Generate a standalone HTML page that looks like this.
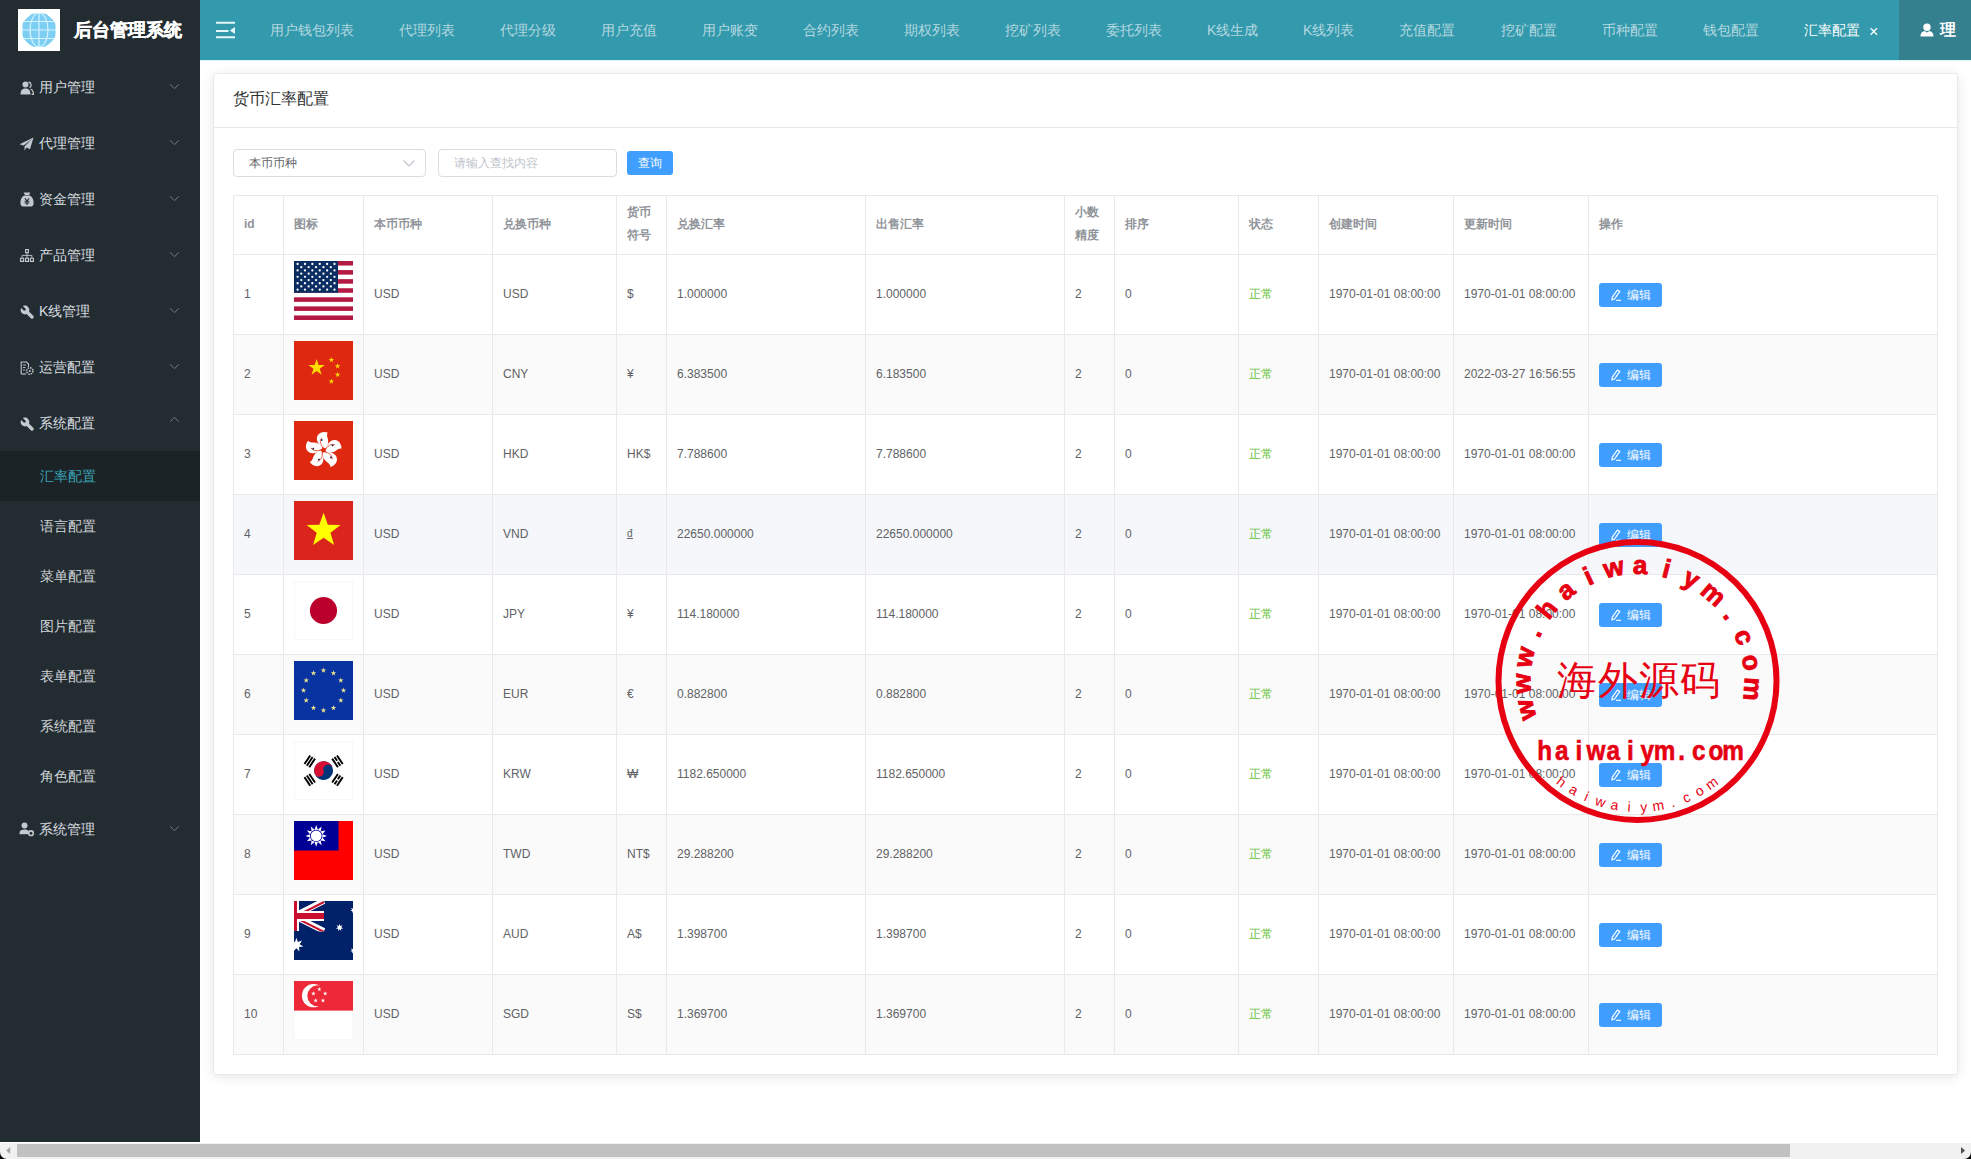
<!DOCTYPE html><html><head><meta charset="utf-8"><title>货币汇率配置</title><style>
*{box-sizing:border-box;margin:0;padding:0}
html,body{width:1971px;height:1159px;overflow:hidden;background:#fff;font-family:"Liberation Sans",sans-serif;}
.abs{position:absolute}
#side{position:absolute;left:0;top:0;width:200px;height:1142px;background:#232c31}
#hdr{position:absolute;left:200px;top:0;width:1771px;height:60px;background:#3399ac}
.tab{position:absolute;top:0;height:60px;line-height:60px;font-size:14px;color:#b4d8e0;white-space:nowrap}
.menu{position:absolute;left:0;width:200px;height:56px;font-size:14px;color:#d9dde0}
.menu .t{position:absolute;left:39px;top:0;line-height:56px}
.sub{position:absolute;left:0;width:200px;height:50px;font-size:14px;color:#d0d4d7}
.sub .t{position:absolute;left:40px;top:0;line-height:50px}
#card{position:absolute;left:213px;top:73px;width:1745px;height:1002px;background:#fff;border:1px solid #e9e9e9;border-radius:3px;box-shadow:0 2px 12px 0 rgba(0,0,0,.1)}
.cell{position:absolute;font-size:12px;color:#606266;white-space:nowrap}
.hcell{position:absolute;font-size:12px;color:#909399;font-weight:bold;white-space:nowrap}
</style></head><body>
<div id="side">
<div class="abs" style="left:74px;top:17px;font-size:18px;font-weight:bold;color:#fff;line-height:26px;-webkit-text-stroke:0.4px #fff">后台管理系统</div>
<div class="menu" style="top:59px"><span class="t">用户管理</span></div>
<div class="menu" style="top:115px"><span class="t">代理管理</span></div>
<div class="menu" style="top:171px"><span class="t">资金管理</span></div>
<div class="menu" style="top:227px"><span class="t">产品管理</span></div>
<div class="menu" style="top:283px"><span class="t">K线管理</span></div>
<div class="menu" style="top:339px"><span class="t">运营配置</span></div>
<div class="menu" style="top:395px"><span class="t">系统配置</span></div>
<div class="sub" style="top:451px;background:#1c2327;color:#3ba3b8;"><span class="t">汇率配置</span></div>
<div class="sub" style="top:501px;"><span class="t">语言配置</span></div>
<div class="sub" style="top:551px;"><span class="t">菜单配置</span></div>
<div class="sub" style="top:601px;"><span class="t">图片配置</span></div>
<div class="sub" style="top:651px;"><span class="t">表单配置</span></div>
<div class="sub" style="top:701px;"><span class="t">系统配置</span></div>
<div class="sub" style="top:751px;"><span class="t">角色配置</span></div>
<div class="menu" style="top:801px"><span class="t">系统管理</span></div>
<svg class="abs" style="left:20px;top:81px" width="14" height="14" viewBox="0 0 14 14"><circle cx="5.5" cy="3.6" r="3" fill="#c3c9ce"/><path d="M0.5 13.5 C0.5 9 2.5 7.5 5.5 7.5 C8.5 7.5 10.5 9 10.5 13.5 Z" fill="#c3c9ce"/><path d="M8.6 1 A3 3 0 0 1 9.5 6.6 M10.5 8 C12.5 8.8 13.5 10.5 13.5 13.5 L11.6 13.5" fill="none" stroke="#c3c9ce" stroke-width="1.3"/></svg>
<svg class="abs" style="left:19px;top:137px" width="15" height="14" viewBox="0 0 15 14"><path d="M14.5 0.5 L0.5 7.2 L4.6 8.6 L13 2 L5.6 9.2 L5.4 13.5 L7.6 10.4 L11 12.2 Z" fill="#c3c9ce"/></svg>
<svg class="abs" style="left:20px;top:192px" width="14" height="15" viewBox="0 0 14 15"><path d="M3.6 0.6 H10.4 L9 3 H5 Z" fill="#c3c9ce"/><path d="M4.2 3.6 H9.8 C12.4 5 13.6 7.6 13.6 11 C13.6 13.4 12.6 14.4 11 14.4 H3 C1.4 14.4 0.4 13.4 0.4 11 C0.4 7.6 1.6 5 4.2 3.6 Z" fill="#c3c9ce"/><path d="M4.8 6.4 L7 8.8 L9.2 6.4 M4.6 9.2 H9.4 M4.6 11 H9.4 M7 8.8 V13" stroke="#232c31" stroke-width="1.1" fill="none"/></svg>
<svg class="abs" style="left:20px;top:249px" width="14" height="13" viewBox="0 0 14 13"><path d="M5.6 0.6 H8.4 V3.6 H5.6 Z M0.6 9.2 H3.6 V12.4 H0.6 Z M5.5 9.2 H8.5 V12.4 H5.5 Z M10.4 9.2 H13.4 V12.4 H10.4 Z" fill="none" stroke="#c3c9ce" stroke-width="1.1"/><path d="M7 3.6 V9.2 M2.1 9.2 V6.4 H11.9 V9.2" fill="none" stroke="#c3c9ce" stroke-width="0.9"/></svg>
<svg class="abs" style="left:20px;top:305px" width="14" height="14" viewBox="0 0 14 14"><path d="M6 6 L12 12" stroke="#c3c9ce" stroke-width="3.4" stroke-linecap="round"/><circle cx="5" cy="5" r="4.4" fill="#c3c9ce"/><path d="M1.2 1.2 L4.4 4.4" stroke="#232c31" stroke-width="2.6" stroke-linecap="round"/></svg>
<svg class="abs" style="left:20px;top:361px" width="14" height="14" viewBox="0 0 14 14"><path d="M1.2 13 V1 H6.5 L8.5 3 V6" fill="none" stroke="#c3c9ce" stroke-width="1.1"/><path d="M1.2 13 H6" fill="none" stroke="#c3c9ce" stroke-width="1.1"/><path d="M3 4 H6 M3 6.5 H5.5 M3 9 H5" stroke="#c3c9ce" stroke-width="0.9"/><circle cx="9.8" cy="10" r="3.2" fill="none" stroke="#c3c9ce" stroke-width="1.4" stroke-dasharray="1.6 0.9"/><circle cx="9.8" cy="10" r="1" fill="#c3c9ce"/></svg>
<svg class="abs" style="left:20px;top:417px" width="14" height="14" viewBox="0 0 14 14"><path d="M6 6 L12 12" stroke="#c3c9ce" stroke-width="3.4" stroke-linecap="round"/><circle cx="5" cy="5" r="4.4" fill="#c3c9ce"/><path d="M1.2 1.2 L4.4 4.4" stroke="#232c31" stroke-width="2.6" stroke-linecap="round"/></svg>
<svg class="abs" style="left:19px;top:822px" width="16" height="15" viewBox="0 0 16 15"><circle cx="5.5" cy="3.6" r="3" fill="#c3c9ce"/><path d="M0.5 11 C0.5 8.5 2.5 7.4 5.5 7.4 C7.5 7.4 9 8 9.8 9 L9.8 11 Z" fill="#c3c9ce"/><path d="M0.5 11.6 H9" stroke="#c3c9ce" stroke-width="1.2"/><circle cx="12" cy="11.2" r="2.3" fill="none" stroke="#c3c9ce" stroke-width="1.6"/></svg>
<svg class="abs" style="left:169px;top:83px" width="11" height="7" viewBox="0 0 11 7"><path d="M1 1.2 L5.5 5.7 L10 1.2" fill="none" stroke="#737b81" stroke-width="1"/></svg>
<svg class="abs" style="left:169px;top:139px" width="11" height="7" viewBox="0 0 11 7"><path d="M1 1.2 L5.5 5.7 L10 1.2" fill="none" stroke="#737b81" stroke-width="1"/></svg>
<svg class="abs" style="left:169px;top:195px" width="11" height="7" viewBox="0 0 11 7"><path d="M1 1.2 L5.5 5.7 L10 1.2" fill="none" stroke="#737b81" stroke-width="1"/></svg>
<svg class="abs" style="left:169px;top:251px" width="11" height="7" viewBox="0 0 11 7"><path d="M1 1.2 L5.5 5.7 L10 1.2" fill="none" stroke="#737b81" stroke-width="1"/></svg>
<svg class="abs" style="left:169px;top:307px" width="11" height="7" viewBox="0 0 11 7"><path d="M1 1.2 L5.5 5.7 L10 1.2" fill="none" stroke="#737b81" stroke-width="1"/></svg>
<svg class="abs" style="left:169px;top:363px" width="11" height="7" viewBox="0 0 11 7"><path d="M1 1.2 L5.5 5.7 L10 1.2" fill="none" stroke="#737b81" stroke-width="1"/></svg>
<svg class="abs" style="left:169px;top:416px" width="11" height="7" viewBox="0 0 11 7"><path d="M1 5.8 L5.5 1.3 L10 5.8" fill="none" stroke="#737b81" stroke-width="1"/></svg>
<svg class="abs" style="left:169px;top:825px" width="11" height="7" viewBox="0 0 11 7"><path d="M1 1.2 L5.5 5.7 L10 1.2" fill="none" stroke="#737b81" stroke-width="1"/></svg>
<svg class="abs" style="left:18px;top:9px" width="42" height="42" viewBox="0 0 42 42"><rect width="42" height="42" fill="#fff"/><clipPath id="gc"><path d="M14 4.5 H28 L37.5 13 V29 L28 38 H14 L4.5 29 V13 Z"/></clipPath><g clip-path="url(#gc)"><circle cx="21" cy="21" r="17.5" fill="#7ccff2"/><path d="M3 12.5 H39 M3 21 H39 M3 29.5 H39 M21 3 V39" stroke="#d6f3ff" stroke-width="1.2"/><ellipse cx="21" cy="21" rx="9" ry="17" fill="none" stroke="#d6f3ff" stroke-width="1.2"/></g></svg>
</div>
<div id="hdr">
<div class="tab" style="left:70px">用户钱包列表</div>
<div class="tab" style="left:199px">代理列表</div>
<div class="tab" style="left:300px">代理分级</div>
<div class="tab" style="left:401px">用户充值</div>
<div class="tab" style="left:502px">用户账变</div>
<div class="tab" style="left:603px">合约列表</div>
<div class="tab" style="left:704px">期权列表</div>
<div class="tab" style="left:805px">挖矿列表</div>
<div class="tab" style="left:906px">委托列表</div>
<div class="tab" style="left:1007px">K线生成</div>
<div class="tab" style="left:1103px">K线列表</div>
<div class="tab" style="left:1199px">充值配置</div>
<div class="tab" style="left:1301px">挖矿配置</div>
<div class="tab" style="left:1402px">币种配置</div>
<div class="tab" style="left:1503px">钱包配置</div>
<div class="tab" style="left:1604px;color:#fff">汇率配置</div>
<div class="tab" style="left:1669px;top:2px;color:#fff;font-size:16px">×</div>
<div class="abs" style="left:1699px;top:0;width:72px;height:60px;background:#34808f"></div>
<div class="tab" style="left:1740px;color:#fff;font-size:16px;font-weight:bold">理</div>
<svg class="abs" style="left:16px;top:21px" width="20" height="18" viewBox="0 0 20 18"><path d="M0 1.8 H19 M0 10 H12.5 M0 16.3 H19" stroke="#e6f7fb" stroke-width="1.9"/><path d="M19 6 L13.8 9.5 L19 13 Z" fill="#e6f7fb"/></svg>
<svg class="abs" style="left:1720px;top:23px" width="14" height="14" viewBox="0 0 14 14"><circle cx="7" cy="4.2" r="3.7" fill="#fff"/><path d="M0.5 13.5 C0.5 9.5 3 8.2 4.6 8 L7 9.5 L9.4 8 C11 8.2 13.5 9.5 13.5 13.5 Z" fill="#fff"/></svg>
</div>
<div id="card"></div>
<div class="abs" style="left:233px;top:87px;font-size:16px;color:#303133;line-height:24px">货币汇率配置</div>
<div class="abs" style="left:214px;top:127px;width:1743px;height:1px;background:#e9e9e9"></div>
<div class="abs" style="left:233px;top:149px;width:193px;height:28px;border:1px solid #dcdcdc;border-radius:4px;background:#fff"></div>
<div class="abs" style="left:249px;top:149px;font-size:12px;color:#606266;line-height:29px">本币币种</div>
<svg class="abs" style="left:402px;top:158px" width="14" height="10" viewBox="0 0 14 10"><path d="M1.5 2.5 L7 8 L12.5 2.5" fill="none" stroke="#c0c4cc" stroke-width="1.2"/></svg>
<div class="abs" style="left:438px;top:149px;width:179px;height:28px;border:1px solid #dcdcdc;border-radius:4px;background:#fff"></div>
<div class="abs" style="left:454px;top:149px;font-size:12px;color:#c0c4cc;line-height:29px">请输入查找内容</div>
<div class="abs" style="left:627px;top:151px;width:46px;height:24px;background:#409eff;border-radius:3px;color:#fff;font-size:12px;line-height:24px;text-align:center">查询</div>
<div class="abs" style="left:233px;top:254px;width:1705px;height:80px;background:#fff"></div>
<div class="abs" style="left:233px;top:334px;width:1705px;height:80px;background:#fafafa"></div>
<div class="abs" style="left:233px;top:414px;width:1705px;height:80px;background:#fff"></div>
<div class="abs" style="left:233px;top:494px;width:1705px;height:80px;background:#f5f7fa"></div>
<div class="abs" style="left:233px;top:574px;width:1705px;height:80px;background:#fff"></div>
<div class="abs" style="left:233px;top:654px;width:1705px;height:80px;background:#fafafa"></div>
<div class="abs" style="left:233px;top:734px;width:1705px;height:80px;background:#fff"></div>
<div class="abs" style="left:233px;top:814px;width:1705px;height:80px;background:#fafafa"></div>
<div class="abs" style="left:233px;top:894px;width:1705px;height:80px;background:#fff"></div>
<div class="abs" style="left:233px;top:974px;width:1705px;height:80px;background:#fafafa"></div>
<div class="abs" style="left:233px;top:195px;width:1705px;height:1px;background:#e9e9e9"></div>
<div class="abs" style="left:233px;top:254px;width:1705px;height:1px;background:#e9e9e9"></div>
<div class="abs" style="left:233px;top:334px;width:1705px;height:1px;background:#e9e9e9"></div>
<div class="abs" style="left:233px;top:414px;width:1705px;height:1px;background:#e9e9e9"></div>
<div class="abs" style="left:233px;top:494px;width:1705px;height:1px;background:#e9e9e9"></div>
<div class="abs" style="left:233px;top:574px;width:1705px;height:1px;background:#e9e9e9"></div>
<div class="abs" style="left:233px;top:654px;width:1705px;height:1px;background:#e9e9e9"></div>
<div class="abs" style="left:233px;top:734px;width:1705px;height:1px;background:#e9e9e9"></div>
<div class="abs" style="left:233px;top:814px;width:1705px;height:1px;background:#e9e9e9"></div>
<div class="abs" style="left:233px;top:894px;width:1705px;height:1px;background:#e9e9e9"></div>
<div class="abs" style="left:233px;top:974px;width:1705px;height:1px;background:#e9e9e9"></div>
<div class="abs" style="left:233px;top:1054px;width:1705px;height:1px;background:#e9e9e9"></div>
<div class="abs" style="left:233px;top:195px;width:1px;height:860px;background:#e9e9e9"></div>
<div class="abs" style="left:283px;top:195px;width:1px;height:860px;background:#e9e9e9"></div>
<div class="abs" style="left:363px;top:195px;width:1px;height:860px;background:#e9e9e9"></div>
<div class="abs" style="left:492px;top:195px;width:1px;height:860px;background:#e9e9e9"></div>
<div class="abs" style="left:616px;top:195px;width:1px;height:860px;background:#e9e9e9"></div>
<div class="abs" style="left:666px;top:195px;width:1px;height:860px;background:#e9e9e9"></div>
<div class="abs" style="left:865px;top:195px;width:1px;height:860px;background:#e9e9e9"></div>
<div class="abs" style="left:1064px;top:195px;width:1px;height:860px;background:#e9e9e9"></div>
<div class="abs" style="left:1114px;top:195px;width:1px;height:860px;background:#e9e9e9"></div>
<div class="abs" style="left:1238px;top:195px;width:1px;height:860px;background:#e9e9e9"></div>
<div class="abs" style="left:1318px;top:195px;width:1px;height:860px;background:#e9e9e9"></div>
<div class="abs" style="left:1453px;top:195px;width:1px;height:860px;background:#e9e9e9"></div>
<div class="abs" style="left:1588px;top:195px;width:1px;height:860px;background:#e9e9e9"></div>
<div class="abs" style="left:1937px;top:195px;width:1px;height:860px;background:#e9e9e9"></div>
<div class="hcell" style="left:244px;top:195px;line-height:59px">id</div>
<div class="hcell" style="left:294px;top:195px;line-height:59px">图标</div>
<div class="hcell" style="left:374px;top:195px;line-height:59px">本币币种</div>
<div class="hcell" style="left:503px;top:195px;line-height:59px">兑换币种</div>
<div class="hcell" style="left:627px;top:201px;line-height:23px">货币<br>符号</div>
<div class="hcell" style="left:677px;top:195px;line-height:59px">兑换汇率</div>
<div class="hcell" style="left:876px;top:195px;line-height:59px">出售汇率</div>
<div class="hcell" style="left:1075px;top:201px;line-height:23px">小数<br>精度</div>
<div class="hcell" style="left:1125px;top:195px;line-height:59px">排序</div>
<div class="hcell" style="left:1249px;top:195px;line-height:59px">状态</div>
<div class="hcell" style="left:1329px;top:195px;line-height:59px">创建时间</div>
<div class="hcell" style="left:1464px;top:195px;line-height:59px">更新时间</div>
<div class="hcell" style="left:1599px;top:195px;line-height:59px">操作</div>
<div class="cell" style="left:244px;top:254px;line-height:80px">1</div>
<div class="cell" style="left:374px;top:254px;line-height:80px">USD</div>
<div class="cell" style="left:503px;top:254px;line-height:80px">USD</div>
<div class="cell" style="left:627px;top:254px;line-height:80px">$</div>
<div class="cell" style="left:677px;top:254px;line-height:80px">1.000000</div>
<div class="cell" style="left:876px;top:254px;line-height:80px">1.000000</div>
<div class="cell" style="left:1075px;top:254px;line-height:80px">2</div>
<div class="cell" style="left:1125px;top:254px;line-height:80px">0</div>
<div class="cell" style="left:1329px;top:254px;line-height:80px">1970-01-01 08:00:00</div>
<div class="cell" style="left:1464px;top:254px;line-height:80px">1970-01-01 08:00:00</div>
<div class="cell" style="left:1249px;top:254px;line-height:80px;color:#67c23a">正常</div>
<svg class="abs" style="left:294px;top:261px" width="59" height="59" viewBox="0 0 59 59"><rect width="59" height="59" fill="#fff"/><rect y="0.00" width="59" height="4.54" fill="#b31942"/><rect y="9.08" width="59" height="4.54" fill="#b31942"/><rect y="18.15" width="59" height="4.54" fill="#b31942"/><rect y="27.23" width="59" height="4.54" fill="#b31942"/><rect y="36.31" width="59" height="4.54" fill="#b31942"/><rect y="45.38" width="59" height="4.54" fill="#b31942"/><rect y="54.46" width="59" height="4.54" fill="#b31942"/><rect width="44" height="31.77" fill="#0a2d62"/><circle cx="3.60" cy="3.00" r="1.15" fill="#fff"/><circle cx="10.98" cy="3.00" r="1.15" fill="#fff"/><circle cx="18.36" cy="3.00" r="1.15" fill="#fff"/><circle cx="25.74" cy="3.00" r="1.15" fill="#fff"/><circle cx="33.12" cy="3.00" r="1.15" fill="#fff"/><circle cx="40.50" cy="3.00" r="1.15" fill="#fff"/><circle cx="7.29" cy="6.21" r="1.15" fill="#fff"/><circle cx="14.67" cy="6.21" r="1.15" fill="#fff"/><circle cx="22.05" cy="6.21" r="1.15" fill="#fff"/><circle cx="29.43" cy="6.21" r="1.15" fill="#fff"/><circle cx="36.81" cy="6.21" r="1.15" fill="#fff"/><circle cx="3.60" cy="9.42" r="1.15" fill="#fff"/><circle cx="10.98" cy="9.42" r="1.15" fill="#fff"/><circle cx="18.36" cy="9.42" r="1.15" fill="#fff"/><circle cx="25.74" cy="9.42" r="1.15" fill="#fff"/><circle cx="33.12" cy="9.42" r="1.15" fill="#fff"/><circle cx="40.50" cy="9.42" r="1.15" fill="#fff"/><circle cx="7.29" cy="12.63" r="1.15" fill="#fff"/><circle cx="14.67" cy="12.63" r="1.15" fill="#fff"/><circle cx="22.05" cy="12.63" r="1.15" fill="#fff"/><circle cx="29.43" cy="12.63" r="1.15" fill="#fff"/><circle cx="36.81" cy="12.63" r="1.15" fill="#fff"/><circle cx="3.60" cy="15.84" r="1.15" fill="#fff"/><circle cx="10.98" cy="15.84" r="1.15" fill="#fff"/><circle cx="18.36" cy="15.84" r="1.15" fill="#fff"/><circle cx="25.74" cy="15.84" r="1.15" fill="#fff"/><circle cx="33.12" cy="15.84" r="1.15" fill="#fff"/><circle cx="40.50" cy="15.84" r="1.15" fill="#fff"/><circle cx="7.29" cy="19.05" r="1.15" fill="#fff"/><circle cx="14.67" cy="19.05" r="1.15" fill="#fff"/><circle cx="22.05" cy="19.05" r="1.15" fill="#fff"/><circle cx="29.43" cy="19.05" r="1.15" fill="#fff"/><circle cx="36.81" cy="19.05" r="1.15" fill="#fff"/><circle cx="3.60" cy="22.26" r="1.15" fill="#fff"/><circle cx="10.98" cy="22.26" r="1.15" fill="#fff"/><circle cx="18.36" cy="22.26" r="1.15" fill="#fff"/><circle cx="25.74" cy="22.26" r="1.15" fill="#fff"/><circle cx="33.12" cy="22.26" r="1.15" fill="#fff"/><circle cx="40.50" cy="22.26" r="1.15" fill="#fff"/><circle cx="7.29" cy="25.47" r="1.15" fill="#fff"/><circle cx="14.67" cy="25.47" r="1.15" fill="#fff"/><circle cx="22.05" cy="25.47" r="1.15" fill="#fff"/><circle cx="29.43" cy="25.47" r="1.15" fill="#fff"/><circle cx="36.81" cy="25.47" r="1.15" fill="#fff"/><circle cx="3.60" cy="28.68" r="1.15" fill="#fff"/><circle cx="10.98" cy="28.68" r="1.15" fill="#fff"/><circle cx="18.36" cy="28.68" r="1.15" fill="#fff"/><circle cx="25.74" cy="28.68" r="1.15" fill="#fff"/><circle cx="33.12" cy="28.68" r="1.15" fill="#fff"/><circle cx="40.50" cy="28.68" r="1.15" fill="#fff"/></svg>
<div class="abs" style="left:1599px;top:283px;width:63px;height:24px;background:#409eff;border-radius:3px"></div>
<div class="abs" style="left:1627px;top:283px;font-size:12px;color:#fff;line-height:24px">编辑</div>
<svg class="abs" style="left:1610px;top:289px" width="12" height="12" viewBox="0 0 12 12"><path d="M7.4 1 L9.8 2.4 L4.6 10 L2 11 L2.2 8.4 Z" fill="none" stroke="#fff" stroke-width="1.2" stroke-linejoin="round"/><path d="M6 11.3 H11" stroke="#fff" stroke-width="1.1"/></svg>
<div class="cell" style="left:244px;top:334px;line-height:80px">2</div>
<div class="cell" style="left:374px;top:334px;line-height:80px">USD</div>
<div class="cell" style="left:503px;top:334px;line-height:80px">CNY</div>
<div class="cell" style="left:627px;top:334px;line-height:80px">¥</div>
<div class="cell" style="left:677px;top:334px;line-height:80px">6.383500</div>
<div class="cell" style="left:876px;top:334px;line-height:80px">6.183500</div>
<div class="cell" style="left:1075px;top:334px;line-height:80px">2</div>
<div class="cell" style="left:1125px;top:334px;line-height:80px">0</div>
<div class="cell" style="left:1329px;top:334px;line-height:80px">1970-01-01 08:00:00</div>
<div class="cell" style="left:1464px;top:334px;line-height:80px">2022-03-27 16:56:55</div>
<div class="cell" style="left:1249px;top:334px;line-height:80px;color:#67c23a">正常</div>
<svg class="abs" style="left:294px;top:341px" width="59" height="59" viewBox="0 0 59 59"><rect width="59" height="59" fill="#de2910"/><path d="M22.60,18.10 L24.53,24.04 L30.78,24.04 L25.72,27.72 L27.65,33.66 L22.60,29.99 L17.55,33.66 L19.48,27.72 L14.42,24.04 L20.67,24.04Z" fill="#ffde00"/><path d="M37.40,16.10 L38.05,18.10 L40.16,18.10 L38.45,19.34 L39.10,21.35 L37.40,20.11 L35.70,21.35 L36.35,19.34 L34.64,18.10 L36.75,18.10Z" fill="#ffde00"/><path d="M43.60,22.30 L44.25,24.30 L46.36,24.30 L44.65,25.54 L45.30,27.55 L43.60,26.31 L41.90,27.55 L42.55,25.54 L40.84,24.30 L42.95,24.30Z" fill="#ffde00"/><path d="M43.60,30.80 L44.25,32.80 L46.36,32.80 L44.65,34.04 L45.30,36.05 L43.60,34.81 L41.90,36.05 L42.55,34.04 L40.84,32.80 L42.95,32.80Z" fill="#ffde00"/><path d="M37.40,37.50 L38.05,39.50 L40.16,39.50 L38.45,40.74 L39.10,42.75 L37.40,41.51 L35.70,42.75 L36.35,40.74 L34.64,39.50 L36.75,39.50Z" fill="#ffde00"/></svg>
<div class="abs" style="left:1599px;top:363px;width:63px;height:24px;background:#409eff;border-radius:3px"></div>
<div class="abs" style="left:1627px;top:363px;font-size:12px;color:#fff;line-height:24px">编辑</div>
<svg class="abs" style="left:1610px;top:369px" width="12" height="12" viewBox="0 0 12 12"><path d="M7.4 1 L9.8 2.4 L4.6 10 L2 11 L2.2 8.4 Z" fill="none" stroke="#fff" stroke-width="1.2" stroke-linejoin="round"/><path d="M6 11.3 H11" stroke="#fff" stroke-width="1.1"/></svg>
<div class="cell" style="left:244px;top:414px;line-height:80px">3</div>
<div class="cell" style="left:374px;top:414px;line-height:80px">USD</div>
<div class="cell" style="left:503px;top:414px;line-height:80px">HKD</div>
<div class="cell" style="left:627px;top:414px;line-height:80px">HK$</div>
<div class="cell" style="left:677px;top:414px;line-height:80px">7.788600</div>
<div class="cell" style="left:876px;top:414px;line-height:80px">7.788600</div>
<div class="cell" style="left:1075px;top:414px;line-height:80px">2</div>
<div class="cell" style="left:1125px;top:414px;line-height:80px">0</div>
<div class="cell" style="left:1329px;top:414px;line-height:80px">1970-01-01 08:00:00</div>
<div class="cell" style="left:1464px;top:414px;line-height:80px">1970-01-01 08:00:00</div>
<div class="cell" style="left:1249px;top:414px;line-height:80px;color:#67c23a">正常</div>
<svg class="abs" style="left:294px;top:421px" width="59" height="59" viewBox="0 0 59 59"><rect width="59" height="59" fill="#de2910"/><g transform="translate(29.5 29.2) rotate(0)"><path d="M1.8 -1.6 C-3.8 -4 -9 -9.8 -5.6 -15.2 C-3.4 -18.4 1 -18.8 4.2 -17.6 C3 -15.8 3.6 -13.6 4.4 -11.2 C5.2 -7.2 4.4 -3.6 1.8 -1.6 Z" fill="#fff"/><path d="M0.4 -1.8 C-3 -5 -4 -9 -1.8 -12.5" stroke="#de2910" stroke-width="0.7" fill="none"/><circle cx="-1.8" cy="-10.2" r="1" fill="#3a2a50"/></g><g transform="translate(29.5 29.2) rotate(72)"><path d="M1.8 -1.6 C-3.8 -4 -9 -9.8 -5.6 -15.2 C-3.4 -18.4 1 -18.8 4.2 -17.6 C3 -15.8 3.6 -13.6 4.4 -11.2 C5.2 -7.2 4.4 -3.6 1.8 -1.6 Z" fill="#fff"/><path d="M0.4 -1.8 C-3 -5 -4 -9 -1.8 -12.5" stroke="#de2910" stroke-width="0.7" fill="none"/><circle cx="-1.8" cy="-10.2" r="1" fill="#3a2a50"/></g><g transform="translate(29.5 29.2) rotate(144)"><path d="M1.8 -1.6 C-3.8 -4 -9 -9.8 -5.6 -15.2 C-3.4 -18.4 1 -18.8 4.2 -17.6 C3 -15.8 3.6 -13.6 4.4 -11.2 C5.2 -7.2 4.4 -3.6 1.8 -1.6 Z" fill="#fff"/><path d="M0.4 -1.8 C-3 -5 -4 -9 -1.8 -12.5" stroke="#de2910" stroke-width="0.7" fill="none"/><circle cx="-1.8" cy="-10.2" r="1" fill="#3a2a50"/></g><g transform="translate(29.5 29.2) rotate(216)"><path d="M1.8 -1.6 C-3.8 -4 -9 -9.8 -5.6 -15.2 C-3.4 -18.4 1 -18.8 4.2 -17.6 C3 -15.8 3.6 -13.6 4.4 -11.2 C5.2 -7.2 4.4 -3.6 1.8 -1.6 Z" fill="#fff"/><path d="M0.4 -1.8 C-3 -5 -4 -9 -1.8 -12.5" stroke="#de2910" stroke-width="0.7" fill="none"/><circle cx="-1.8" cy="-10.2" r="1" fill="#3a2a50"/></g><g transform="translate(29.5 29.2) rotate(288)"><path d="M1.8 -1.6 C-3.8 -4 -9 -9.8 -5.6 -15.2 C-3.4 -18.4 1 -18.8 4.2 -17.6 C3 -15.8 3.6 -13.6 4.4 -11.2 C5.2 -7.2 4.4 -3.6 1.8 -1.6 Z" fill="#fff"/><path d="M0.4 -1.8 C-3 -5 -4 -9 -1.8 -12.5" stroke="#de2910" stroke-width="0.7" fill="none"/><circle cx="-1.8" cy="-10.2" r="1" fill="#3a2a50"/></g></svg>
<div class="abs" style="left:1599px;top:443px;width:63px;height:24px;background:#409eff;border-radius:3px"></div>
<div class="abs" style="left:1627px;top:443px;font-size:12px;color:#fff;line-height:24px">编辑</div>
<svg class="abs" style="left:1610px;top:449px" width="12" height="12" viewBox="0 0 12 12"><path d="M7.4 1 L9.8 2.4 L4.6 10 L2 11 L2.2 8.4 Z" fill="none" stroke="#fff" stroke-width="1.2" stroke-linejoin="round"/><path d="M6 11.3 H11" stroke="#fff" stroke-width="1.1"/></svg>
<div class="cell" style="left:244px;top:494px;line-height:80px">4</div>
<div class="cell" style="left:374px;top:494px;line-height:80px">USD</div>
<div class="cell" style="left:503px;top:494px;line-height:80px">VND</div>
<div class="cell" style="left:627px;top:494px;line-height:80px"><span style="display:inline-block;font-size:10px;line-height:9px;border-bottom:1px solid #606266;vertical-align:1px">đ</span></div>
<div class="cell" style="left:677px;top:494px;line-height:80px">22650.000000</div>
<div class="cell" style="left:876px;top:494px;line-height:80px">22650.000000</div>
<div class="cell" style="left:1075px;top:494px;line-height:80px">2</div>
<div class="cell" style="left:1125px;top:494px;line-height:80px">0</div>
<div class="cell" style="left:1329px;top:494px;line-height:80px">1970-01-01 08:00:00</div>
<div class="cell" style="left:1464px;top:494px;line-height:80px">1970-01-01 08:00:00</div>
<div class="cell" style="left:1249px;top:494px;line-height:80px;color:#67c23a">正常</div>
<svg class="abs" style="left:294px;top:501px" width="59" height="59" viewBox="0 0 59 59"><rect width="59" height="59" fill="#da251d"/><path d="M29.60,11.70 L33.83,23.78 L46.62,24.07 L36.45,31.82 L40.12,44.08 L29.60,36.80 L19.08,44.08 L22.75,31.82 L12.58,24.07 L25.37,23.78Z" fill="#ffff00"/></svg>
<div class="abs" style="left:1599px;top:523px;width:63px;height:24px;background:#409eff;border-radius:3px"></div>
<div class="abs" style="left:1627px;top:523px;font-size:12px;color:#fff;line-height:24px">编辑</div>
<svg class="abs" style="left:1610px;top:529px" width="12" height="12" viewBox="0 0 12 12"><path d="M7.4 1 L9.8 2.4 L4.6 10 L2 11 L2.2 8.4 Z" fill="none" stroke="#fff" stroke-width="1.2" stroke-linejoin="round"/><path d="M6 11.3 H11" stroke="#fff" stroke-width="1.1"/></svg>
<div class="cell" style="left:244px;top:574px;line-height:80px">5</div>
<div class="cell" style="left:374px;top:574px;line-height:80px">USD</div>
<div class="cell" style="left:503px;top:574px;line-height:80px">JPY</div>
<div class="cell" style="left:627px;top:574px;line-height:80px">¥</div>
<div class="cell" style="left:677px;top:574px;line-height:80px">114.180000</div>
<div class="cell" style="left:876px;top:574px;line-height:80px">114.180000</div>
<div class="cell" style="left:1075px;top:574px;line-height:80px">2</div>
<div class="cell" style="left:1125px;top:574px;line-height:80px">0</div>
<div class="cell" style="left:1329px;top:574px;line-height:80px">1970-01-01 08:00:00</div>
<div class="cell" style="left:1464px;top:574px;line-height:80px">1970-01-01 08:00:00</div>
<div class="cell" style="left:1249px;top:574px;line-height:80px;color:#67c23a">正常</div>
<svg class="abs" style="left:294px;top:581px" width="59" height="59" viewBox="0 0 59 59"><rect width="59" height="59" fill="#fff"/><rect x="0.5" y="0.5" width="58" height="58" fill="none" stroke="#f7f7f7"/><circle cx="29.5" cy="29.5" r="13.6" fill="#bc002d"/></svg>
<div class="abs" style="left:1599px;top:603px;width:63px;height:24px;background:#409eff;border-radius:3px"></div>
<div class="abs" style="left:1627px;top:603px;font-size:12px;color:#fff;line-height:24px">编辑</div>
<svg class="abs" style="left:1610px;top:609px" width="12" height="12" viewBox="0 0 12 12"><path d="M7.4 1 L9.8 2.4 L4.6 10 L2 11 L2.2 8.4 Z" fill="none" stroke="#fff" stroke-width="1.2" stroke-linejoin="round"/><path d="M6 11.3 H11" stroke="#fff" stroke-width="1.1"/></svg>
<div class="cell" style="left:244px;top:654px;line-height:80px">6</div>
<div class="cell" style="left:374px;top:654px;line-height:80px">USD</div>
<div class="cell" style="left:503px;top:654px;line-height:80px">EUR</div>
<div class="cell" style="left:627px;top:654px;line-height:80px">€</div>
<div class="cell" style="left:677px;top:654px;line-height:80px">0.882800</div>
<div class="cell" style="left:876px;top:654px;line-height:80px">0.882800</div>
<div class="cell" style="left:1075px;top:654px;line-height:80px">2</div>
<div class="cell" style="left:1125px;top:654px;line-height:80px">0</div>
<div class="cell" style="left:1329px;top:654px;line-height:80px">1970-01-01 08:00:00</div>
<div class="cell" style="left:1464px;top:654px;line-height:80px">1970-01-01 08:00:00</div>
<div class="cell" style="left:1249px;top:654px;line-height:80px;color:#67c23a">正常</div>
<svg class="abs" style="left:294px;top:661px" width="59" height="59" viewBox="0 0 59 59"><rect width="59" height="59" fill="#0833a0"/><path d="M29.50,6.60 L30.15,8.60 L32.26,8.60 L30.55,9.84 L31.20,11.85 L29.50,10.61 L27.80,11.85 L28.45,9.84 L26.74,8.60 L28.85,8.60Z" fill="#eee68c"/><path d="M39.50,9.28 L40.15,11.28 L42.26,11.28 L40.55,12.52 L41.20,14.53 L39.50,13.29 L37.80,14.53 L38.45,12.52 L36.74,11.28 L38.85,11.28Z" fill="#eee68c"/><path d="M46.82,16.60 L47.47,18.60 L49.58,18.60 L47.87,19.84 L48.53,21.85 L46.82,20.61 L45.12,21.85 L45.77,19.84 L44.06,18.60 L46.17,18.60Z" fill="#eee68c"/><path d="M49.50,26.60 L50.15,28.60 L52.26,28.60 L50.55,29.84 L51.20,31.85 L49.50,30.61 L47.80,31.85 L48.45,29.84 L46.74,28.60 L48.85,28.60Z" fill="#eee68c"/><path d="M46.82,36.60 L47.47,38.60 L49.58,38.60 L47.87,39.84 L48.53,41.85 L46.82,40.61 L45.12,41.85 L45.77,39.84 L44.06,38.60 L46.17,38.60Z" fill="#eee68c"/><path d="M39.50,43.92 L40.15,45.92 L42.26,45.92 L40.55,47.16 L41.20,49.17 L39.50,47.93 L37.80,49.17 L38.45,47.16 L36.74,45.92 L38.85,45.92Z" fill="#eee68c"/><path d="M29.50,46.60 L30.15,48.60 L32.26,48.60 L30.55,49.84 L31.20,51.85 L29.50,50.61 L27.80,51.85 L28.45,49.84 L26.74,48.60 L28.85,48.60Z" fill="#eee68c"/><path d="M19.50,43.92 L20.15,45.92 L22.26,45.92 L20.55,47.16 L21.20,49.17 L19.50,47.93 L17.80,49.17 L18.45,47.16 L16.74,45.92 L18.85,45.92Z" fill="#eee68c"/><path d="M12.18,36.60 L12.83,38.60 L14.94,38.60 L13.23,39.84 L13.88,41.85 L12.18,40.61 L10.47,41.85 L11.13,39.84 L9.42,38.60 L11.53,38.60Z" fill="#eee68c"/><path d="M9.50,26.60 L10.15,28.60 L12.26,28.60 L10.55,29.84 L11.20,31.85 L9.50,30.61 L7.80,31.85 L8.45,29.84 L6.74,28.60 L8.85,28.60Z" fill="#eee68c"/><path d="M12.18,16.60 L12.83,18.60 L14.94,18.60 L13.23,19.84 L13.88,21.85 L12.18,20.61 L10.47,21.85 L11.13,19.84 L9.42,18.60 L11.53,18.60Z" fill="#eee68c"/><path d="M19.50,9.28 L20.15,11.28 L22.26,11.28 L20.55,12.52 L21.20,14.53 L19.50,13.29 L17.80,14.53 L18.45,12.52 L16.74,11.28 L18.85,11.28Z" fill="#eee68c"/></svg>
<div class="abs" style="left:1599px;top:683px;width:63px;height:24px;background:#409eff;border-radius:3px"></div>
<div class="abs" style="left:1627px;top:683px;font-size:12px;color:#fff;line-height:24px">编辑</div>
<svg class="abs" style="left:1610px;top:689px" width="12" height="12" viewBox="0 0 12 12"><path d="M7.4 1 L9.8 2.4 L4.6 10 L2 11 L2.2 8.4 Z" fill="none" stroke="#fff" stroke-width="1.2" stroke-linejoin="round"/><path d="M6 11.3 H11" stroke="#fff" stroke-width="1.1"/></svg>
<div class="cell" style="left:244px;top:734px;line-height:80px">7</div>
<div class="cell" style="left:374px;top:734px;line-height:80px">USD</div>
<div class="cell" style="left:503px;top:734px;line-height:80px">KRW</div>
<div class="cell" style="left:627px;top:734px;line-height:80px">₩</div>
<div class="cell" style="left:677px;top:734px;line-height:80px">1182.650000</div>
<div class="cell" style="left:876px;top:734px;line-height:80px">1182.650000</div>
<div class="cell" style="left:1075px;top:734px;line-height:80px">2</div>
<div class="cell" style="left:1125px;top:734px;line-height:80px">0</div>
<div class="cell" style="left:1329px;top:734px;line-height:80px">1970-01-01 08:00:00</div>
<div class="cell" style="left:1464px;top:734px;line-height:80px">1970-01-01 08:00:00</div>
<div class="cell" style="left:1249px;top:734px;line-height:80px;color:#67c23a">正常</div>
<svg class="abs" style="left:294px;top:741px" width="59" height="59" viewBox="0 0 59 59"><rect width="59" height="59" fill="#fff"/><rect x="0.5" y="0.5" width="58" height="58" fill="none" stroke="#f7f7f7"/><g transform="translate(29.6 29.6) rotate(-18)"><circle cx="0" cy="0" r="9.4" fill="#003478"/><path d="M-9.4 0 A9.4 9.4 0 0 1 9.4 0 A4.7 4.7 0 0 0 0 0 A4.7 4.7 0 0 1 -9.4 0 Z" fill="#d51031"/></g><g transform="translate(29.6 29.6) rotate(-56.3)"><rect x="-5.2" y="-20.50" width="10.4" height="1.9" fill="#000"/><rect x="-5.2" y="-17.60" width="10.4" height="1.9" fill="#000"/><rect x="-5.2" y="-14.70" width="10.4" height="1.9" fill="#000"/></g><g transform="translate(29.6 29.6) rotate(56.3)"><rect x="-5.2" y="-20.50" width="10.4" height="1.9" fill="#000"/><rect x="-5.2" y="-17.60" width="4.5" height="1.9" fill="#000"/><rect x="0.7" y="-17.60" width="4.5" height="1.9" fill="#000"/><rect x="-5.2" y="-14.70" width="10.4" height="1.9" fill="#000"/></g><g transform="translate(29.6 29.6) rotate(123.7)"><rect x="-5.2" y="-20.50" width="10.4" height="1.9" fill="#000"/><rect x="-5.2" y="-17.60" width="4.5" height="1.9" fill="#000"/><rect x="0.7" y="-17.60" width="4.5" height="1.9" fill="#000"/><rect x="-5.2" y="-14.70" width="10.4" height="1.9" fill="#000"/></g><g transform="translate(29.6 29.6) rotate(-123.7)"><rect x="-5.2" y="-20.50" width="10.4" height="1.9" fill="#000"/><rect x="-5.2" y="-17.60" width="10.4" height="1.9" fill="#000"/><rect x="-5.2" y="-14.70" width="10.4" height="1.9" fill="#000"/></g></svg>
<div class="abs" style="left:1599px;top:763px;width:63px;height:24px;background:#409eff;border-radius:3px"></div>
<div class="abs" style="left:1627px;top:763px;font-size:12px;color:#fff;line-height:24px">编辑</div>
<svg class="abs" style="left:1610px;top:769px" width="12" height="12" viewBox="0 0 12 12"><path d="M7.4 1 L9.8 2.4 L4.6 10 L2 11 L2.2 8.4 Z" fill="none" stroke="#fff" stroke-width="1.2" stroke-linejoin="round"/><path d="M6 11.3 H11" stroke="#fff" stroke-width="1.1"/></svg>
<div class="cell" style="left:244px;top:814px;line-height:80px">8</div>
<div class="cell" style="left:374px;top:814px;line-height:80px">USD</div>
<div class="cell" style="left:503px;top:814px;line-height:80px">TWD</div>
<div class="cell" style="left:627px;top:814px;line-height:80px">NT$</div>
<div class="cell" style="left:677px;top:814px;line-height:80px">29.288200</div>
<div class="cell" style="left:876px;top:814px;line-height:80px">29.288200</div>
<div class="cell" style="left:1075px;top:814px;line-height:80px">2</div>
<div class="cell" style="left:1125px;top:814px;line-height:80px">0</div>
<div class="cell" style="left:1329px;top:814px;line-height:80px">1970-01-01 08:00:00</div>
<div class="cell" style="left:1464px;top:814px;line-height:80px">1970-01-01 08:00:00</div>
<div class="cell" style="left:1249px;top:814px;line-height:80px;color:#67c23a">正常</div>
<svg class="abs" style="left:294px;top:821px" width="59" height="59" viewBox="0 0 59 59"><rect width="59" height="59" fill="#fe0000"/><rect width="44.5" height="29.5" fill="#000095"/><path d="M22.20,4.10 L23.86,8.72 L27.60,5.55 L26.73,10.37 L31.55,9.50 L28.38,13.24 L33.00,14.90 L28.38,16.56 L31.55,20.30 L26.73,19.43 L27.60,24.25 L23.86,21.08 L22.20,25.70 L20.54,21.08 L16.80,24.25 L17.67,19.43 L12.85,20.30 L16.02,16.56 L11.40,14.90 L16.02,13.24 L12.85,9.50 L17.67,10.37 L16.80,5.55 L20.54,8.72Z" fill="#fff"/><circle cx="22.2" cy="14.9" r="6.2" fill="#000095"/><circle cx="22.2" cy="14.9" r="5.4" fill="#fff"/></svg>
<div class="abs" style="left:1599px;top:843px;width:63px;height:24px;background:#409eff;border-radius:3px"></div>
<div class="abs" style="left:1627px;top:843px;font-size:12px;color:#fff;line-height:24px">编辑</div>
<svg class="abs" style="left:1610px;top:849px" width="12" height="12" viewBox="0 0 12 12"><path d="M7.4 1 L9.8 2.4 L4.6 10 L2 11 L2.2 8.4 Z" fill="none" stroke="#fff" stroke-width="1.2" stroke-linejoin="round"/><path d="M6 11.3 H11" stroke="#fff" stroke-width="1.1"/></svg>
<div class="cell" style="left:244px;top:894px;line-height:80px">9</div>
<div class="cell" style="left:374px;top:894px;line-height:80px">USD</div>
<div class="cell" style="left:503px;top:894px;line-height:80px">AUD</div>
<div class="cell" style="left:627px;top:894px;line-height:80px">A$</div>
<div class="cell" style="left:677px;top:894px;line-height:80px">1.398700</div>
<div class="cell" style="left:876px;top:894px;line-height:80px">1.398700</div>
<div class="cell" style="left:1075px;top:894px;line-height:80px">2</div>
<div class="cell" style="left:1125px;top:894px;line-height:80px">0</div>
<div class="cell" style="left:1329px;top:894px;line-height:80px">1970-01-01 08:00:00</div>
<div class="cell" style="left:1464px;top:894px;line-height:80px">1970-01-01 08:00:00</div>
<div class="cell" style="left:1249px;top:894px;line-height:80px;color:#67c23a">正常</div>
<svg class="abs" style="left:294px;top:901px" width="59" height="59" viewBox="0 0 59 59"><rect width="59" height="59" fill="#012169"/><svg x="0" y="0" width="31" height="30.5" viewBox="30 0 31 30.5"><rect x="0" width="60" height="30" fill="#012169"/><path d="M0,0 L60,30 M60,0 L0,30" stroke="#fff" stroke-width="6"/><path d="M30,15 L60,0 M30,15 L60,30" stroke="#c8102e" stroke-width="2" transform="translate(0 1)"/><path d="M30,0 V30 M0,15 H60" stroke="#fff" stroke-width="10"/><path d="M30,0 V30 M0,15 H60" stroke="#c8102e" stroke-width="6"/></svg><path d="M2.40,36.80 L3.83,41.03 L8.03,39.51 L5.62,43.27 L9.42,45.60 L4.98,46.06 L5.52,50.49 L2.40,47.30 L-0.72,50.49 L-0.18,46.06 L-4.62,45.60 L-0.82,43.27 L-3.23,39.51 L0.97,41.03Z" fill="#fff"/><path d="M45.60,22.80 L46.34,25.07 L48.57,24.23 L47.26,26.22 L49.30,27.45 L46.93,27.66 L47.25,30.02 L45.60,28.30 L43.95,30.02 L44.27,27.66 L41.90,27.45 L43.94,26.22 L42.63,24.23 L44.86,25.07Z" fill="#fff"/><path d="M59.50,5.80 L60.15,7.65 L62.00,7.00 L60.96,8.67 L62.62,9.71 L60.67,9.94 L60.89,11.88 L59.50,10.50 L58.11,11.88 L58.33,9.94 L56.38,9.71 L58.04,8.67 L57.00,7.00 L58.85,7.65Z" fill="#fff"/><path d="M59.50,46.10 L60.15,48.15 L62.16,47.38 L60.96,49.17 L62.81,50.26 L60.67,50.44 L60.98,52.56 L59.50,51.00 L58.02,52.56 L58.33,50.44 L56.19,50.26 L58.04,49.17 L56.84,47.38 L58.85,48.15Z" fill="#fff"/></svg>
<div class="abs" style="left:1599px;top:923px;width:63px;height:24px;background:#409eff;border-radius:3px"></div>
<div class="abs" style="left:1627px;top:923px;font-size:12px;color:#fff;line-height:24px">编辑</div>
<svg class="abs" style="left:1610px;top:929px" width="12" height="12" viewBox="0 0 12 12"><path d="M7.4 1 L9.8 2.4 L4.6 10 L2 11 L2.2 8.4 Z" fill="none" stroke="#fff" stroke-width="1.2" stroke-linejoin="round"/><path d="M6 11.3 H11" stroke="#fff" stroke-width="1.1"/></svg>
<div class="cell" style="left:244px;top:974px;line-height:80px">10</div>
<div class="cell" style="left:374px;top:974px;line-height:80px">USD</div>
<div class="cell" style="left:503px;top:974px;line-height:80px">SGD</div>
<div class="cell" style="left:627px;top:974px;line-height:80px">S$</div>
<div class="cell" style="left:677px;top:974px;line-height:80px">1.369700</div>
<div class="cell" style="left:876px;top:974px;line-height:80px">1.369700</div>
<div class="cell" style="left:1075px;top:974px;line-height:80px">2</div>
<div class="cell" style="left:1125px;top:974px;line-height:80px">0</div>
<div class="cell" style="left:1329px;top:974px;line-height:80px">1970-01-01 08:00:00</div>
<div class="cell" style="left:1464px;top:974px;line-height:80px">1970-01-01 08:00:00</div>
<div class="cell" style="left:1249px;top:974px;line-height:80px;color:#67c23a">正常</div>
<svg class="abs" style="left:294px;top:981px" width="59" height="59" viewBox="0 0 59 59"><rect width="59" height="59" fill="#fff"/><rect x="0.5" y="30" width="58" height="28.5" fill="none" stroke="#f8f8f8"/><rect width="59" height="29.6" fill="#ed2939"/><circle cx="19.5" cy="14.7" r="11.6" fill="#fff"/><circle cx="23.8" cy="14.85" r="10.5" fill="#ed2939"/><path d="M25.30,6.00 L25.82,7.59 L27.49,7.59 L26.14,8.57 L26.65,10.16 L25.30,9.18 L23.95,10.16 L24.46,8.57 L23.11,7.59 L24.78,7.59Z" fill="#fff"/><path d="M31.20,10.28 L31.71,11.87 L33.38,11.87 L32.03,12.86 L32.55,14.44 L31.20,13.46 L29.84,14.44 L30.36,12.86 L29.01,11.87 L30.68,11.87Z" fill="#fff"/><path d="M28.94,17.22 L29.46,18.81 L31.13,18.81 L29.78,19.79 L30.30,21.38 L28.94,20.39 L27.59,21.38 L28.11,19.79 L26.76,18.81 L28.43,18.81Z" fill="#fff"/><path d="M21.66,17.22 L22.17,18.81 L23.84,18.81 L22.49,19.79 L23.01,21.38 L21.66,20.39 L20.30,21.38 L20.82,19.79 L19.47,18.81 L21.14,18.81Z" fill="#fff"/><path d="M19.40,10.28 L19.92,11.87 L21.59,11.87 L20.24,12.86 L20.76,14.44 L19.40,13.46 L18.05,14.44 L18.57,12.86 L17.22,11.87 L18.89,11.87Z" fill="#fff"/></svg>
<div class="abs" style="left:1599px;top:1003px;width:63px;height:24px;background:#409eff;border-radius:3px"></div>
<div class="abs" style="left:1627px;top:1003px;font-size:12px;color:#fff;line-height:24px">编辑</div>
<svg class="abs" style="left:1610px;top:1009px" width="12" height="12" viewBox="0 0 12 12"><path d="M7.4 1 L9.8 2.4 L4.6 10 L2 11 L2.2 8.4 Z" fill="none" stroke="#fff" stroke-width="1.2" stroke-linejoin="round"/><path d="M6 11.3 H11" stroke="#fff" stroke-width="1.1"/></svg>
<div class="abs" style="left:200px;top:60px;width:1771px;height:1px;background:#dcf4f8"></div>
<div class="abs" style="left:0;top:1143px;width:1971px;height:16px;background:#f1f1f1"></div>
<div class="abs" style="left:17px;top:1144px;width:1773px;height:13px;background:#c1c1c1"></div>
<svg class="abs" style="left:0;top:1143px" width="17" height="16" viewBox="0 0 17 16"><path d="M10.2 4 L6.2 7.5 L10.2 11 Z" fill="#a3a3a3"/></svg>
<svg class="abs" style="left:1954px;top:1143px" width="17" height="16" viewBox="0 0 17 16"><path d="M7 4 L11 7.5 L7 11 Z" fill="#505050"/></svg>
<svg class="abs" style="left:0;top:1152px" width="7" height="7" viewBox="0 0 7 7"><path d="M0 0 L0 7 L7 7 A7 7 0 0 1 0 0 Z" fill="#000"/></svg>
<svg class="abs" style="left:1964px;top:1152px" width="7" height="7" viewBox="0 0 7 7"><path d="M7 0 L7 7 L0 7 A7 7 0 0 0 7 0 Z" fill="#000"/></svg>
<svg class="abs" style="left:0;top:0;overflow:visible" width="1971" height="1159" viewBox="0 0 1971 1159"><circle cx="1637.5" cy="681" r="139" fill="none" stroke="#e60012" stroke-width="6"/><text transform="translate(1637.5 681) rotate(-104.50) translate(0 -107)" text-anchor="middle" font-family="Liberation Sans" font-weight="bold" font-size="26" fill="#e60012" stroke="#e60012" stroke-width="0.9">w</text><text transform="translate(1637.5 681) rotate(-91.27) translate(0 -107)" text-anchor="middle" font-family="Liberation Sans" font-weight="bold" font-size="26" fill="#e60012" stroke="#e60012" stroke-width="0.9">w</text><text transform="translate(1637.5 681) rotate(-78.03) translate(0 -107)" text-anchor="middle" font-family="Liberation Sans" font-weight="bold" font-size="26" fill="#e60012" stroke="#e60012" stroke-width="0.9">w</text><text transform="translate(1637.5 681) rotate(-64.80) translate(0 -107)" text-anchor="middle" font-family="Liberation Sans" font-weight="bold" font-size="26" fill="#e60012" stroke="#e60012" stroke-width="0.9">.</text><text transform="translate(1637.5 681) rotate(-51.57) translate(0 -107)" text-anchor="middle" font-family="Liberation Sans" font-weight="bold" font-size="26" fill="#e60012" stroke="#e60012" stroke-width="0.9">h</text><text transform="translate(1637.5 681) rotate(-38.33) translate(0 -107)" text-anchor="middle" font-family="Liberation Sans" font-weight="bold" font-size="26" fill="#e60012" stroke="#e60012" stroke-width="0.9">a</text><text transform="translate(1637.5 681) rotate(-25.10) translate(0 -107)" text-anchor="middle" font-family="Liberation Sans" font-weight="bold" font-size="26" fill="#e60012" stroke="#e60012" stroke-width="0.9">i</text><text transform="translate(1637.5 681) rotate(-11.87) translate(0 -107)" text-anchor="middle" font-family="Liberation Sans" font-weight="bold" font-size="26" fill="#e60012" stroke="#e60012" stroke-width="0.9">w</text><text transform="translate(1637.5 681) rotate(1.37) translate(0 -107)" text-anchor="middle" font-family="Liberation Sans" font-weight="bold" font-size="26" fill="#e60012" stroke="#e60012" stroke-width="0.9">a</text><text transform="translate(1637.5 681) rotate(14.60) translate(0 -107)" text-anchor="middle" font-family="Liberation Sans" font-weight="bold" font-size="26" fill="#e60012" stroke="#e60012" stroke-width="0.9">i</text><text transform="translate(1637.5 681) rotate(27.83) translate(0 -107)" text-anchor="middle" font-family="Liberation Sans" font-weight="bold" font-size="26" fill="#e60012" stroke="#e60012" stroke-width="0.9">y</text><text transform="translate(1637.5 681) rotate(41.07) translate(0 -107)" text-anchor="middle" font-family="Liberation Sans" font-weight="bold" font-size="26" fill="#e60012" stroke="#e60012" stroke-width="0.9">m</text><text transform="translate(1637.5 681) rotate(54.30) translate(0 -107)" text-anchor="middle" font-family="Liberation Sans" font-weight="bold" font-size="26" fill="#e60012" stroke="#e60012" stroke-width="0.9">.</text><text transform="translate(1637.5 681) rotate(67.53) translate(0 -107)" text-anchor="middle" font-family="Liberation Sans" font-weight="bold" font-size="26" fill="#e60012" stroke="#e60012" stroke-width="0.9">c</text><text transform="translate(1637.5 681) rotate(80.77) translate(0 -107)" text-anchor="middle" font-family="Liberation Sans" font-weight="bold" font-size="26" fill="#e60012" stroke="#e60012" stroke-width="0.9">o</text><text transform="translate(1637.5 681) rotate(94.00) translate(0 -107)" text-anchor="middle" font-family="Liberation Sans" font-weight="bold" font-size="26" fill="#e60012" stroke="#e60012" stroke-width="0.9">m</text><text transform="translate(1637.5 681) rotate(37.00) translate(0 131)" text-anchor="middle" font-family="Liberation Sans" font-size="14" fill="#e60012">h</text><text transform="translate(1637.5 681) rotate(30.36) translate(0 131)" text-anchor="middle" font-family="Liberation Sans" font-size="14" fill="#e60012">a</text><text transform="translate(1637.5 681) rotate(23.73) translate(0 131)" text-anchor="middle" font-family="Liberation Sans" font-size="14" fill="#e60012">i</text><text transform="translate(1637.5 681) rotate(17.09) translate(0 131)" text-anchor="middle" font-family="Liberation Sans" font-size="14" fill="#e60012">w</text><text transform="translate(1637.5 681) rotate(10.45) translate(0 131)" text-anchor="middle" font-family="Liberation Sans" font-size="14" fill="#e60012">a</text><text transform="translate(1637.5 681) rotate(3.82) translate(0 131)" text-anchor="middle" font-family="Liberation Sans" font-size="14" fill="#e60012">i</text><text transform="translate(1637.5 681) rotate(-2.82) translate(0 131)" text-anchor="middle" font-family="Liberation Sans" font-size="14" fill="#e60012">y</text><text transform="translate(1637.5 681) rotate(-9.45) translate(0 131)" text-anchor="middle" font-family="Liberation Sans" font-size="14" fill="#e60012">m</text><text transform="translate(1637.5 681) rotate(-16.09) translate(0 131)" text-anchor="middle" font-family="Liberation Sans" font-size="14" fill="#e60012">.</text><text transform="translate(1637.5 681) rotate(-22.73) translate(0 131)" text-anchor="middle" font-family="Liberation Sans" font-size="14" fill="#e60012">c</text><text transform="translate(1637.5 681) rotate(-29.36) translate(0 131)" text-anchor="middle" font-family="Liberation Sans" font-size="14" fill="#e60012">o</text><text transform="translate(1637.5 681) rotate(-36.00) translate(0 131)" text-anchor="middle" font-family="Liberation Sans" font-size="14" fill="#e60012">m</text><text x="1639" y="694" text-anchor="middle" font-family="Liberation Serif" font-size="40" fill="#e60012" letter-spacing="1">海外源码</text><text transform="scale(0.9 1)" x="1716.2 1735.3 1754.3 1773.3 1792.4 1811.4 1830.4 1849.5 1868.5 1887.5 1906.6 1925.6" y="760" text-anchor="middle" font-family="Liberation Sans" font-weight="bold" font-size="27" fill="#e60012" stroke="#e60012" stroke-width="0.6">haiwaiym.com</text></svg>
</body></html>
